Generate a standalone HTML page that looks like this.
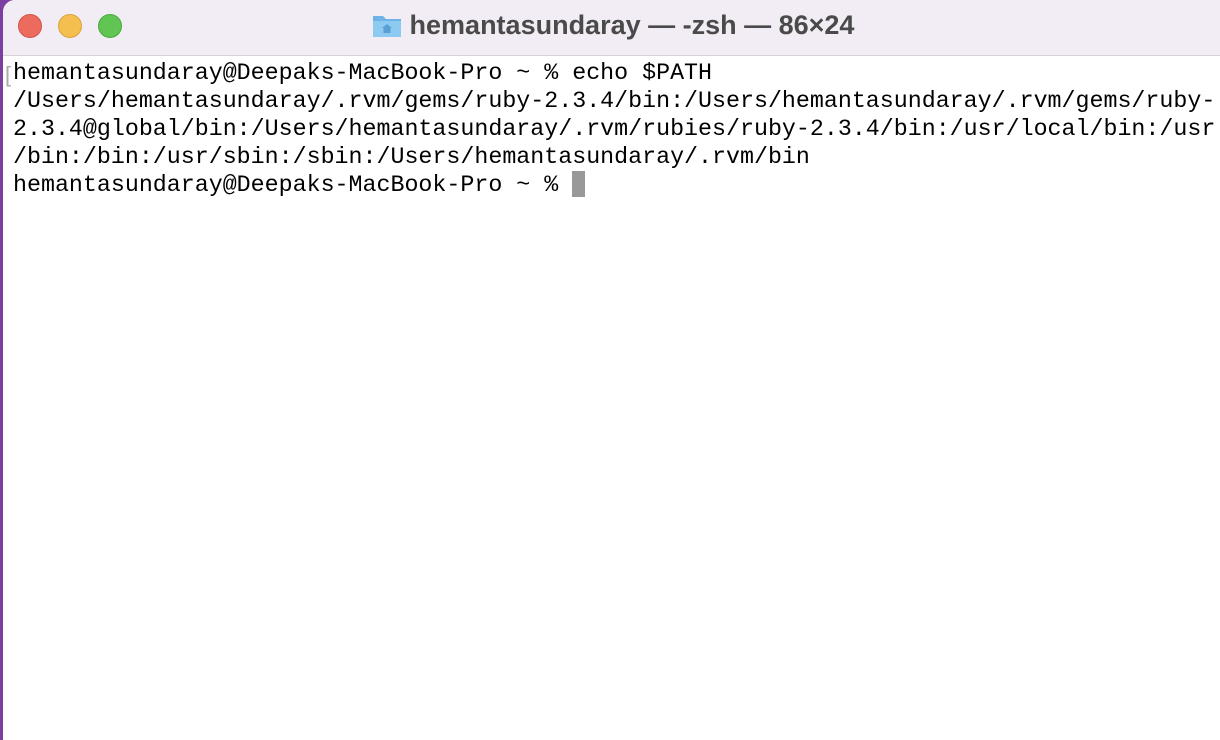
<!DOCTYPE html>
<html><head><style>
html,body{margin:0;padding:0;width:1220px;height:733px;overflow:hidden;background:#7b3fa0;}
.win{position:absolute;left:3px;top:0;width:1230px;height:740px;background:#fff;border-top-left-radius:12px;overflow:hidden;}
.tb{position:absolute;left:0;top:0;right:0;height:55px;background:#f2edf4;border-bottom:1px solid #d6d2d8;}
.dot{position:absolute;top:14px;width:24px;height:24px;border-radius:50%;}
.title{position:absolute;left:0;width:1220px;top:10px;text-align:center;font:bold 27px "Liberation Sans",sans-serif;color:#4a4a4a;}
.term{position:absolute;left:10px;top:59px;font:23.3px/28px "Liberation Mono",monospace;color:#000;white-space:pre;}
.cur{display:inline-block;width:13px;height:26px;background:#999;vertical-align:-6px;}
.br{position:absolute;left:2px;top:62px;font:22px "Liberation Sans",sans-serif;color:#aaa;}
</style></head><body>
<div class="win">
<div class="tb">
<div class="dot" style="left:15px;background:#ec6a5e;border:1px solid #d15448;width:22px;height:22px"></div>
<div class="dot" style="left:55px;background:#f5bf4f;border:1px solid #d9a23d;width:22px;height:22px"></div>
<div class="dot" style="left:95px;background:#61c554;border:1px solid #4aa83e;width:22px;height:22px"></div>
<div class="title"><svg width="30" height="28" viewBox="0 0 30 28" style="vertical-align:-5px;margin-right:8px"><path d="M1 5h10l3 3h15v18H1z" fill="#6fb3e6"/><path d="M1 10h28v16H1z" fill="#8ccaf2"/><path d="M15 13l-5 4h1.5v5h7v-5H20z" fill="#5a9fd4"/></svg>hemantasundaray — -zsh — 86×24</div>
</div>
<div class="br">[</div>
<div class="term">hemantasundaray@Deepaks-MacBook-Pro ~ % echo $PATH
/Users/hemantasundaray/.rvm/gems/ruby-2.3.4/bin:/Users/hemantasundaray/.rvm/gems/ruby-
2.3.4@global/bin:/Users/hemantasundaray/.rvm/rubies/ruby-2.3.4/bin:/usr/local/bin:/usr
/bin:/bin:/usr/sbin:/sbin:/Users/hemantasundaray/.rvm/bin
hemantasundaray@Deepaks-MacBook-Pro ~ % <span class="cur"></span></div>
</div>
</body></html>
